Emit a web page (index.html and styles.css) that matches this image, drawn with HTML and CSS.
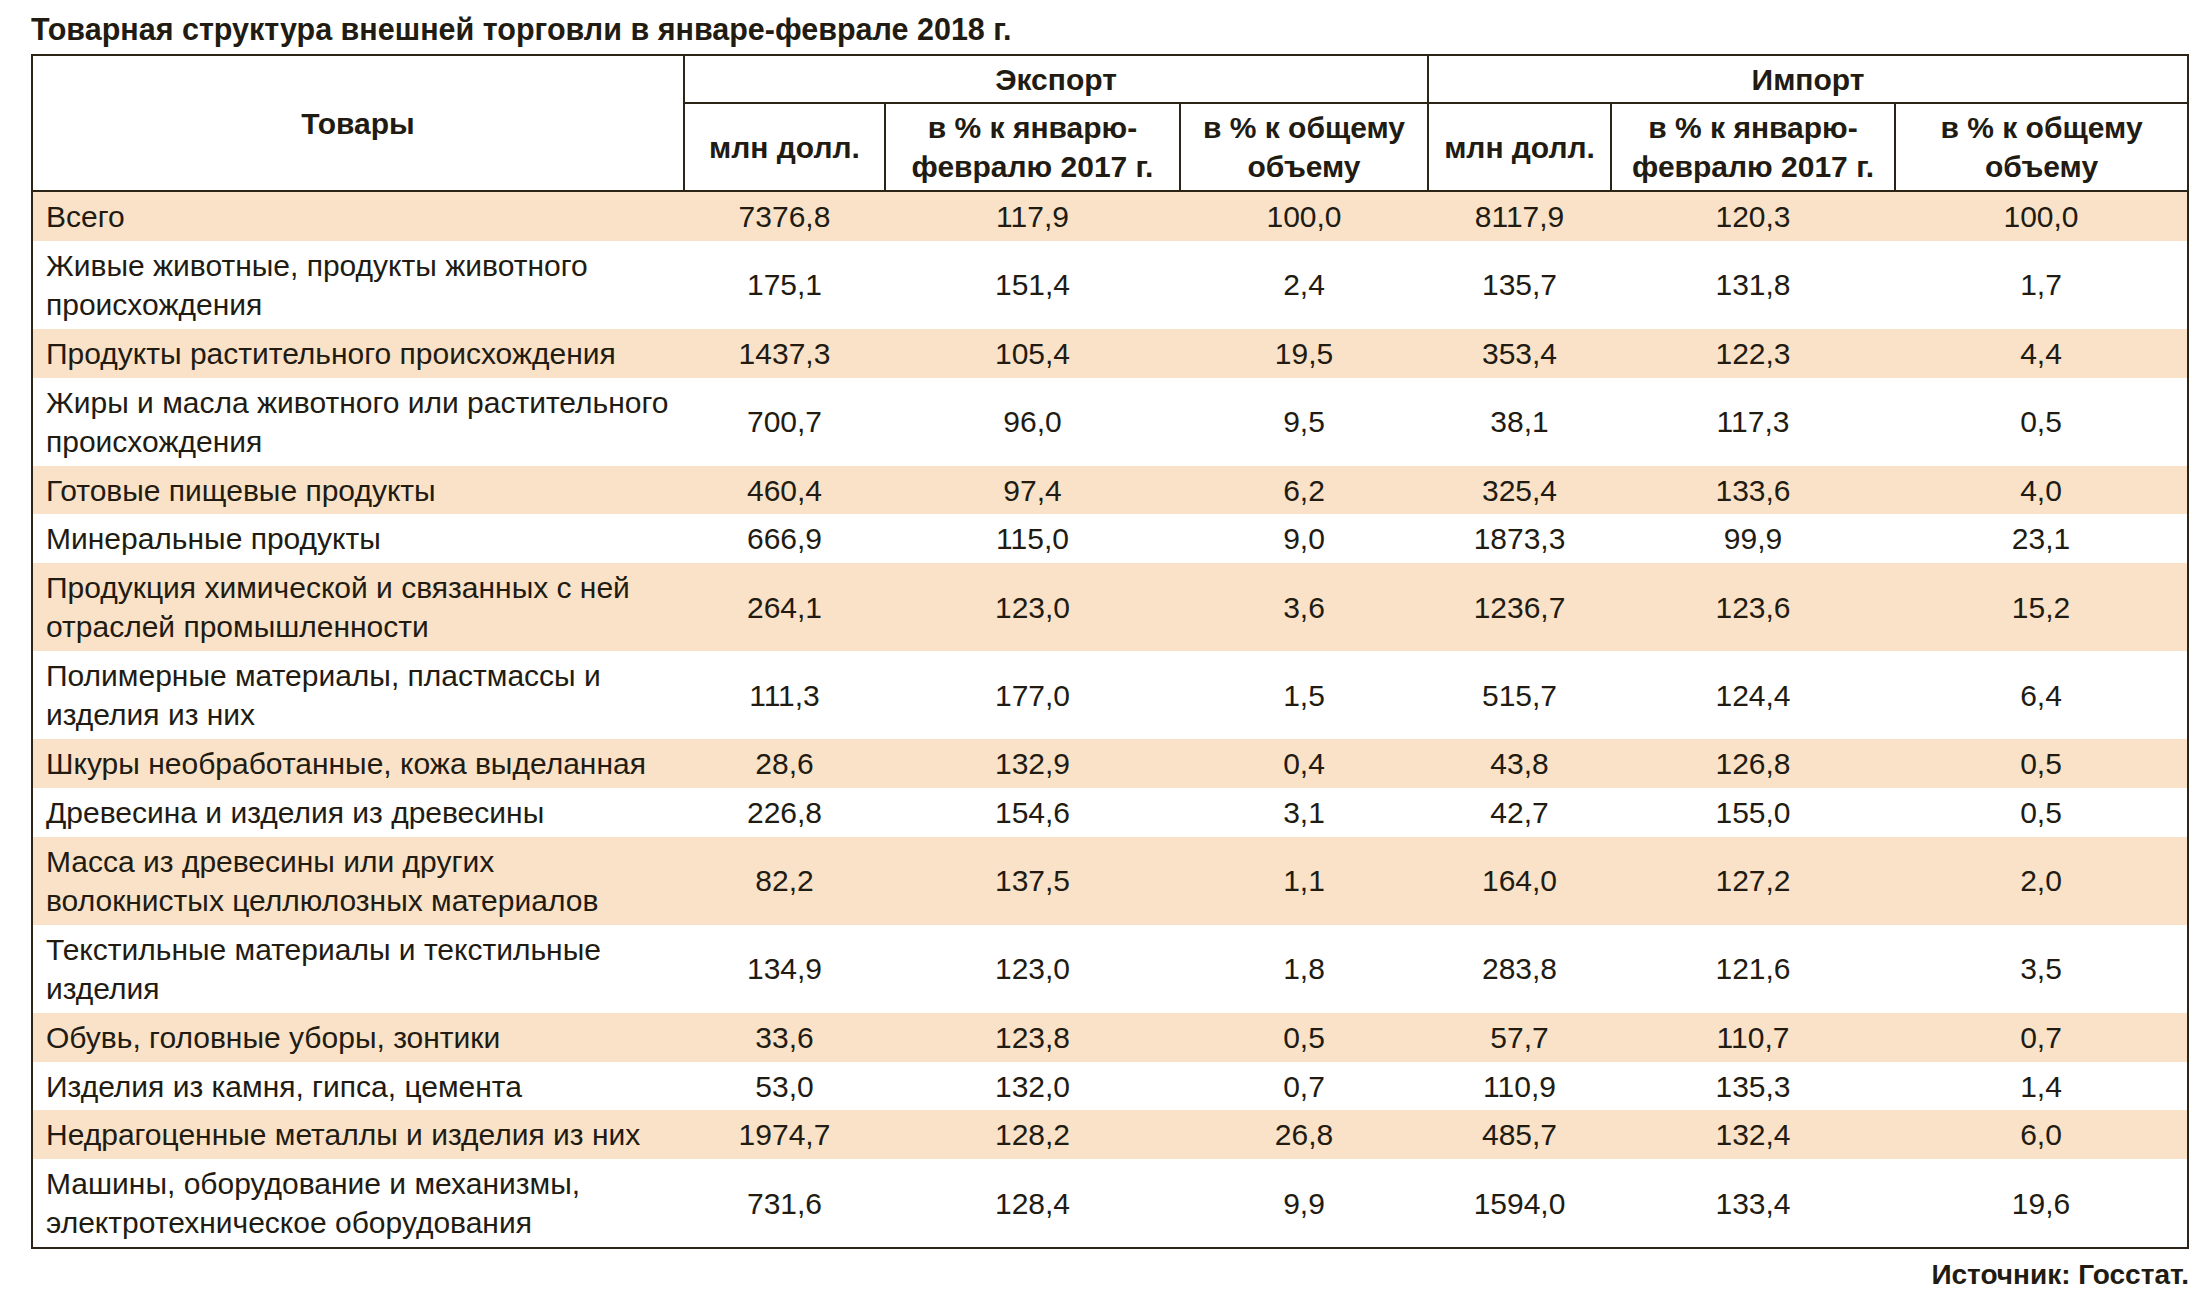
FILE: index.html
```html
<!DOCTYPE html>
<html lang="ru">
<head>
<meta charset="utf-8">
<title>Товарная структура внешней торговли</title>
<link rel="stylesheet" href="styles.css">
</head>
<body>
<div class="page">
  <h1 class="title">Товарная структура внешней торговли в январе-феврале 2018 г.</h1>
  <table class="trade">
    <colgroup>
      <col class="c-goods">
      <col class="c-e1">
      <col class="c-e2">
      <col class="c-e3">
      <col class="c-i1">
      <col class="c-i2">
      <col class="c-i3">
    </colgroup>
    <thead>
      <tr class="h1">
        <th rowspan="2">Товары</th>
        <th colspan="3">Экспорт</th>
        <th colspan="3">Импорт</th>
      </tr>
      <tr class="h2">
        <th>млн долл.</th>
        <th>в % к январю-<br>февралю 2017 г.</th>
        <th>в % к общему<br>объему</th>
        <th>млн долл.</th>
        <th>в % к январю-<br>февралю 2017 г.</th>
        <th>в % к общему<br>объему</th>
      </tr>
    </thead>
    <tbody>
      <tr><td>Всего</td><td>7376,8</td><td>117,9</td><td>100,0</td><td>8117,9</td><td>120,3</td><td>100,0</td></tr>
      <tr><td>Живые животные, продукты животного происхождения</td><td>175,1</td><td>151,4</td><td>2,4</td><td>135,7</td><td>131,8</td><td>1,7</td></tr>
      <tr><td>Продукты растительного происхождения</td><td>1437,3</td><td>105,4</td><td>19,5</td><td>353,4</td><td>122,3</td><td>4,4</td></tr>
      <tr><td>Жиры и масла животного или растительного происхождения</td><td>700,7</td><td>96,0</td><td>9,5</td><td>38,1</td><td>117,3</td><td>0,5</td></tr>
      <tr><td>Готовые пищевые продукты</td><td>460,4</td><td>97,4</td><td>6,2</td><td>325,4</td><td>133,6</td><td>4,0</td></tr>
      <tr><td>Минеральные продукты</td><td>666,9</td><td>115,0</td><td>9,0</td><td>1873,3</td><td>99,9</td><td>23,1</td></tr>
      <tr><td>Продукция химической и связанных с ней отраслей промышленности</td><td>264,1</td><td>123,0</td><td>3,6</td><td>1236,7</td><td>123,6</td><td>15,2</td></tr>
      <tr><td>Полимерные материалы, пластмассы и изделия из них</td><td>111,3</td><td>177,0</td><td>1,5</td><td>515,7</td><td>124,4</td><td>6,4</td></tr>
      <tr><td>Шкуры необработанные, кожа выделанная</td><td>28,6</td><td>132,9</td><td>0,4</td><td>43,8</td><td>126,8</td><td>0,5</td></tr>
      <tr><td>Древесина и изделия из древесины</td><td>226,8</td><td>154,6</td><td>3,1</td><td>42,7</td><td>155,0</td><td>0,5</td></tr>
      <tr><td>Масса из древесины или других волокнистых целлюлозных материалов</td><td>82,2</td><td>137,5</td><td>1,1</td><td>164,0</td><td>127,2</td><td>2,0</td></tr>
      <tr><td>Текстильные материалы и текстильные изделия</td><td>134,9</td><td>123,0</td><td>1,8</td><td>283,8</td><td>121,6</td><td>3,5</td></tr>
      <tr><td>Обувь, головные уборы, зонтики</td><td>33,6</td><td>123,8</td><td>0,5</td><td>57,7</td><td>110,7</td><td>0,7</td></tr>
      <tr><td>Изделия из камня, гипса, цемента</td><td>53,0</td><td>132,0</td><td>0,7</td><td>110,9</td><td>135,3</td><td>1,4</td></tr>
      <tr><td>Недрагоценные металлы и изделия из них</td><td>1974,7</td><td>128,2</td><td>26,8</td><td>485,7</td><td>132,4</td><td>6,0</td></tr>
      <tr><td>Машины, оборудование и механизмы, электротехническое оборудования</td><td>731,6</td><td>128,4</td><td>9,9</td><td>1594,0</td><td>133,4</td><td>19,6</td></tr>
    </tbody>
  </table>
  <p class="source">Источник: Госстат.</p>
</div>
</body>
</html>
```
FILE: styles.css
```css
html, body {
  margin: 0;
  padding: 0;
  background: #ffffff;
}

.page {
  width: 2158px;
  padding: 12px 0 0 31px;
  font-family: "Liberation Sans", Arial, sans-serif;
  color: #211b12;
}

.title {
  margin: 0 0 8px 0;
  font-size: 30.5px;
  line-height: 34px;
  font-weight: bold;
  letter-spacing: 0;
}

.trade {
  width: 2158px;
  border-collapse: collapse;
  table-layout: fixed;
  border: 2px solid #2b2417;
  font-size: 30px;
}

.c-goods { width: 652px; }
.c-e1 { width: 201px; }
.c-e2 { width: 295px; }
.c-e3 { width: 248px; }
.c-i1 { width: 183px; }
.c-i2 { width: 284px; }
.c-i3 { width: 293px; }

.trade th {
  border: 2px solid #2b2417;
  font-weight: bold;
  text-align: center;
  vertical-align: middle;
  line-height: 39px;
  padding: 0;
}

.trade .h1 th {
  height: 46px;
}

.trade .h2 th {
  height: 86px;
}

.trade td {
  padding: 5px 0 4.9px 0;
  line-height: 39px;
  text-align: center;
  vertical-align: middle;
}

.trade td:first-child {
  text-align: left;
  padding-left: 13px;
  padding-right: 4px;
}

.trade tbody tr:nth-child(odd) td {
  background: #f9e2c8;
}

.source {
  margin: 10px 0 0 0;
  text-align: right;
  font-size: 28px;
  line-height: 32px;
  font-weight: bold;
}
```
